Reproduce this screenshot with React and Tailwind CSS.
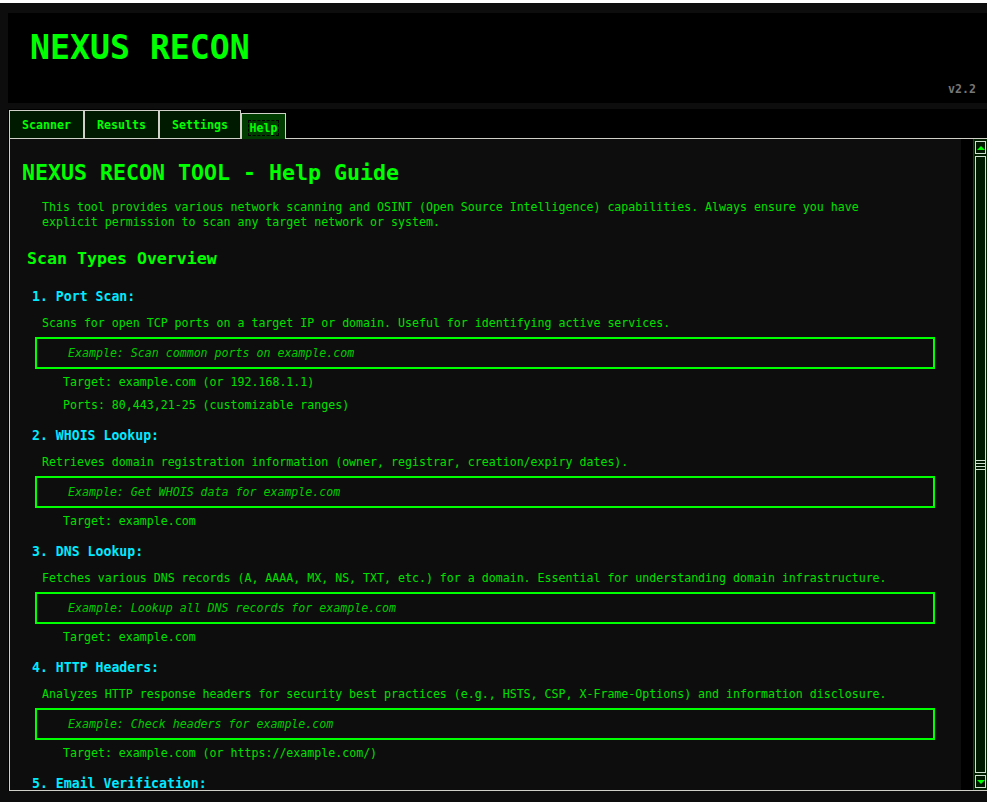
// App.jsx - Nexus Recon help tab
import React from "react";

const sections = [
  {
    title: "1. Port Scan:",
    desc: "Scans for open TCP ports on a target IP or domain. Useful for identifying active services.",
    example: "Example: Scan common ports on example.com",
    params: ["Target: example.com (or 192.168.1.1)", "Ports: 80,443,21-25 (customizable ranges)"],
  },
  {
    title: "2. WHOIS Lookup:",
    desc: "Retrieves domain registration information (owner, registrar, creation/expiry dates).",
    example: "Example: Get WHOIS data for example.com",
    params: ["Target: example.com"],
  },
  {
    title: "3. DNS Lookup:",
    desc: "Fetches various DNS records (A, AAAA, MX, NS, TXT, etc.) for a domain. Essential for understanding domain infrastructure.",
    example: "Example: Lookup all DNS records for example.com",
    params: ["Target: example.com"],
  },
  {
    title: "4. HTTP Headers:",
    desc: "Analyzes HTTP response headers for security best practices (e.g., HSTS, CSP, X-Frame-Options) and information disclosure.",
    example: "Example: Check headers for example.com",
    params: ["Target: example.com (or https://example.com/)"],
  },
  {
    title: "5. Email Verification:",
  },
];

const tabs = [
  { label: "Scanner", w: "w-[75px]" },
  { label: "Results", w: "w-[75px]" },
  { label: "Settings", w: "w-[82px]" },
];

function Section({ s }) {
  return (
    <div className="flex flex-col">
      {/* heading */}
      <div className="ml-[10px] h-[18px] leading-[18px] text-[13.2px] font-bold text-[#00eaff] whitespace-pre">
        {s.title}
      </div>
      {s.desc && (
        <div className="ml-[20px] mt-[10px] h-[15px] leading-[15px] text-[#00e000] whitespace-pre">
          {s.desc}
        </div>
      )}
      {s.example && (
        <div className="ml-[13px] mt-[6px] w-[900px] h-[32px] border-2 border-[#00ff00] pl-[31px] leading-[28px] italic text-[#00cc00] whitespace-pre">
          {s.example}
        </div>
      )}
      {s.params && (
        <div className="ml-[41px] mt-[6px] flex flex-col gap-[8px]">
          {s.params.map((p) => (
            <div key={p} className="h-[15px] leading-[15px] text-[#00e000] whitespace-pre">
              {p}
            </div>
          ))}
        </div>
      )}
    </div>
  );
}

function Scrollbar() {
  return (
    <div className="w-[14px] bg-[#002000] border-l border-[#005000] px-[1px] py-[2px] flex flex-col gap-[2px]">
      <div className="h-[13px] border border-[#d0e0d0] bg-[#001800] flex items-center justify-center">
        <div className="w-0 h-0 border-l-[4px] border-r-[4px] border-b-[4px] border-l-transparent border-r-transparent border-b-[#00ff00]" />
      </div>
      <div className="flex-1 border border-[#d0e0d0] bg-[#001a00] flex flex-col items-stretch justify-center gap-[2px]">
        <div className="h-px bg-[#d0e0d0]" />
        <div className="h-px bg-[#d0e0d0]" />
        <div className="h-px bg-[#d0e0d0]" />
        <div className="h-px bg-[#d0e0d0]" />
      </div>
      <div className="h-[13px] border border-[#d0e0d0] bg-[#001800] flex items-center justify-center">
        <div className="w-0 h-0 border-l-[4px] border-r-[4px] border-t-[4px] border-l-transparent border-r-transparent border-t-[#00ff00]" />
      </div>
    </div>
  );
}

export default function App() {
  return (
    <div className="w-[987px] h-[802px] overflow-hidden bg-[#0d0d0d] font-['DejaVu_Sans_Mono',monospace] text-[11.6px]">
      <div className="h-[3px] bg-white" />
      <div className="pl-[8px] pt-[10px]">
        {/* header */}
        <div className="h-[90px] bg-black flex flex-col justify-between">
          <div className="pl-[22px] pt-[15px] leading-[40px] text-[33.2px] font-bold text-[#00ff00] whitespace-pre">
            NEXUS RECON
          </div>
          <div className="self-end pr-[11px] pb-[6px] leading-[15px] font-bold text-[#777777]">v2.2</div>
        </div>

        <div className="h-[6px]" />

        {/* notebook */}
        <div className="bg-black pl-[1px]">
          <div className="h-[29px] pt-px flex items-end">
            {tabs.map((t) => (
              <div
                key={t.label}
                className={`${t.w} h-[28px] border-t border-l border-r border-[#d0d0c8] bg-[#001a00] flex items-center justify-center pt-[2px] font-bold text-[#00ff00]`}
              >
                {t.label}
              </div>
            ))}
            <div className="relative z-10 -mb-px w-[45px] h-[26px] border-t border-l border-r border-[#d0d0c8] bg-[#003c00] flex items-center justify-center pt-[2px] font-bold text-[#00ff00]">
              <span className="border border-dashed border-black px-[1px] leading-[14px]">Help</span>
            </div>
          </div>

          <div className="h-[653px] border-t border-l border-b border-[#d0d0c8] flex">
            {/* scroll content */}
            <div className="flex-1 bg-[#0d0d0d] overflow-hidden pl-[12px] pt-[20px]">
              <div className="leading-[28px] text-[21.6px] font-bold text-[#00ff00] whitespace-pre">
                NEXUS RECON TOOL - Help Guide
              </div>
              <div className="ml-[20px] mt-[13px] leading-[15px] text-[#00e000] whitespace-pre">
                <div>This tool provides various network scanning and OSINT (Open Source Intelligence) capabilities. Always ensure you have</div>
                <div>explicit permission to scan any target network or system.</div>
              </div>
              <div className="ml-[5px] mt-[18px] leading-[22px] text-[16.6px] font-bold text-[#00ff00] whitespace-pre">
                Scan Types Overview
              </div>
              <div className="mt-[18px] flex flex-col gap-[14px]">
                {sections.map((s) => (
                  <Section key={s.title} s={s} />
                ))}
              </div>
            </div>
            <div className="w-[12px] bg-black" />
            <Scrollbar />
          </div>
        </div>
      </div>
    </div>
  );
}
